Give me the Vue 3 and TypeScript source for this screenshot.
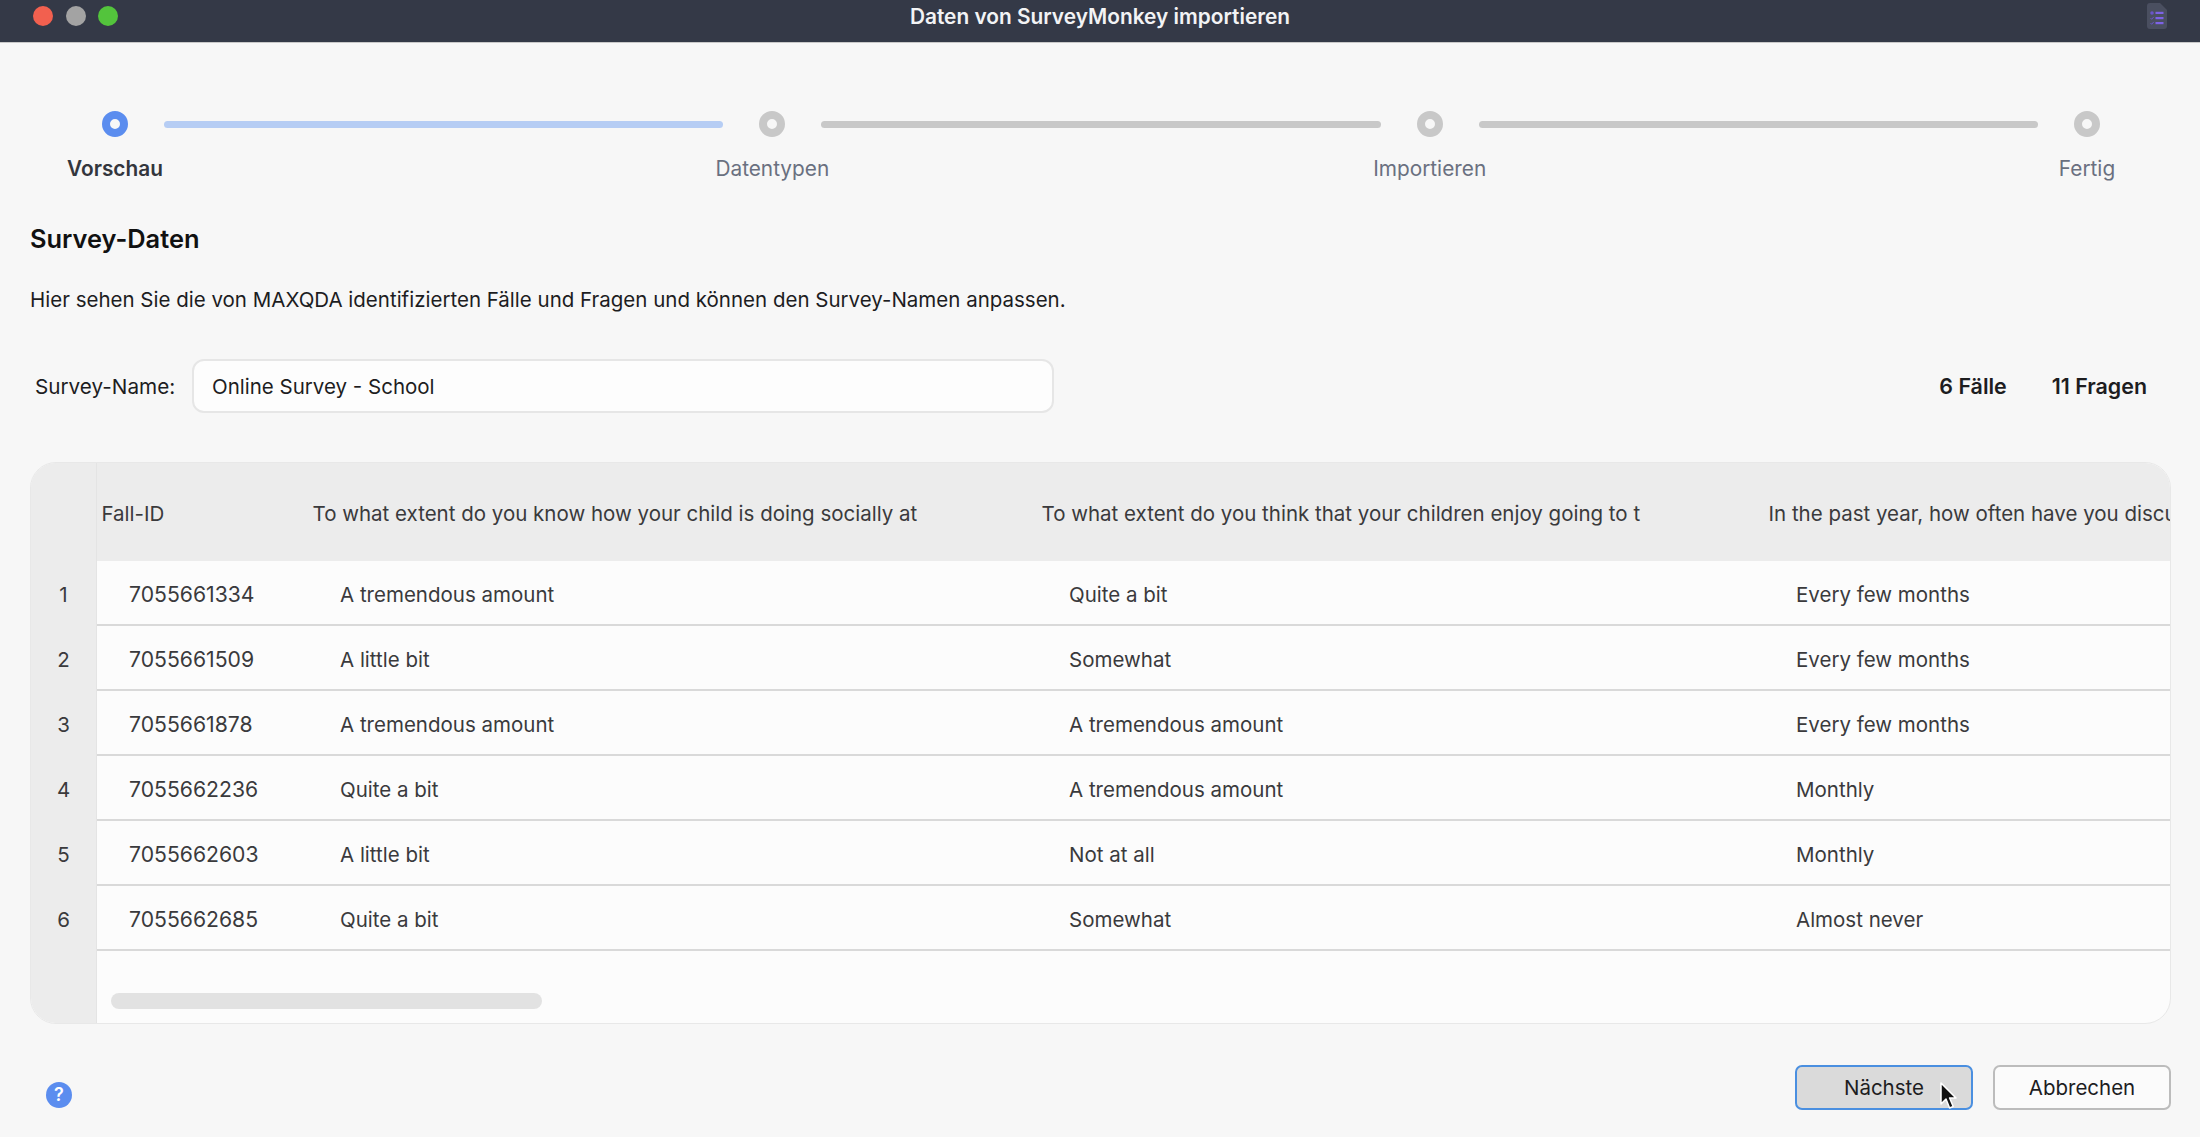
<script setup lang="ts">
const steps = ["Vorschau", "Datentypen", "Importieren", "Fertig"]

const headers = [
  "Fall-ID",
  "To what extent do you know how your child is doing socially at",
  "To what extent do you think that your children enjoy going to t",
  "In the past year, how often have you discussed your child's progress",
]

const rows = [
  ["7055661334", "A tremendous amount", "Quite a bit", "Every few months"],
  ["7055661509", "A little bit", "Somewhat", "Every few months"],
  ["7055661878", "A tremendous amount", "A tremendous amount", "Every few months"],
  ["7055662236", "Quite a bit", "A tremendous amount", "Monthly"],
  ["7055662603", "A little bit", "Not at all", "Monthly"],
  ["7055662685", "Quite a bit", "Somewhat", "Almost never"],
]
</script>

<template>
  <div class="window">
    <header class="titlebar">
      <div class="lights">
        <span class="light red"></span>
        <span class="light grey"></span>
        <span class="light green"></span>
      </div>
      <div class="title">Daten von SurveyMonkey importieren</div>
      <svg class="doc" width="20" height="26" viewBox="0 0 20 26">
        <path d="M3 0h10l7 7v16a3 3 0 0 1-3 3H3a3 3 0 0 1-3-3V3a3 3 0 0 1 3-3z" fill="#4a4f60" />
        <circle cx="5" cy="10" r="1.8" fill="#6a55c8" />
        <rect x="8.5" y="8.8" width="8" height="2.2" fill="#7d62e6" />
        <path d="M3.5 15l1.2 1.3 2-2.4M3.5 20l1.2 1.3 2-2.4" stroke="#6a55c8" stroke-width="1" fill="none" />
        <rect x="8.5" y="14" width="8" height="2.2" fill="#7d62e6" />
        <rect x="8.5" y="19" width="8" height="2.2" fill="#7d62e6" />
      </svg>
    </header>

    <main class="content">
      <div class="stepper">
        <template v-for="(step, i) in steps" :key="step">
          <div class="step" :class="{ active: i === 0 }">
            <span class="dot"></span>
            <span class="step-label">{{ step }}</span>
          </div>
          <div v-if="i < steps.length - 1" class="connector" :class="{ active: i === 0 }"></div>
        </template>
      </div>

      <h1>Survey-Daten</h1>
      <p class="intro">Hier sehen Sie die von MAXQDA identifizierten Fälle und Fragen und können den Survey-Namen anpassen.</p>

      <div class="name-row">
        <label class="name-label" for="survey-name">Survey-Name:</label>
        <input id="survey-name" type="text" value="Online Survey - School" />
        <div class="counts">
          <span>6 Fälle</span>
          <span>11 Fragen</span>
        </div>
      </div>

      <div class="table">
        <div class="row head">
          <div class="index"></div>
          <div v-for="h in headers" :key="h" class="cell">{{ h }}</div>
        </div>
        <div v-for="(row, i) in rows" :key="row[0]" class="row body">
          <div class="index">{{ i + 1 }}</div>
          <div v-for="(value, j) in row" :key="j" class="cell" :class="{ id: j === 0 }">{{ value }}</div>
        </div>
        <div class="table-foot">
          <div class="index"></div>
          <div class="scroll-track"><span class="thumb"></span></div>
        </div>
      </div>

      <footer class="actions">
        <span class="help">?</span>
        <div class="buttons">
          <button type="button" class="primary">
            Nächste
            <svg class="cursor" width="18" height="28" viewBox="0 0 18 28">
              <path d="M2 1v21l5-5 3.6 9 3.6-1.5L10.6 16H17z" fill="#111" stroke="#fff" stroke-width="1.5" stroke-linejoin="round" />
            </svg>
          </button>
          <button type="button">Abbrechen</button>
        </div>
      </footer>
    </main>
  </div>
</template>

<style>
html,
body {
  background: #f7f7f7;
  margin: 0;
}
</style>

<style scoped>
.window {
  background: #f7f7f7;
  color: #1d1d1f;
  font-family: Inter, "Liberation Sans", sans-serif;
  height: 1137px;
  overflow: hidden;
  width: 2200px;
}

.titlebar {
  align-items: center;
  background: #343947;
  border-bottom: 1px solid #c9c9c9;
  display: flex;
  height: 42px;
  justify-content: space-between;
  padding: 0 33px 0 33px;
  position: relative;
}

.lights {
  display: flex;
  gap: 12.5px;
  margin-top: -10px;
}

.light {
  border-radius: 50%;
  height: 20px;
  width: 20px;
}

.red {
  background: #f2604f;
}

.grey {
  background: #a3a3a3;
}

.green {
  background: #53c43c;
}

.title {
  color: #f2f3f5;
  font-size: 20.85px;
  font-weight: 600;
  left: 0;
  position: absolute;
  right: 0;
  text-align: center;
  top: 4px;
}

.doc {
  margin-top: -10px;
}

.stepper {
  display: flex;
  margin-top: 68px;
  padding: 0 64px 0 66px;
}

.step {
  align-items: center;
  color: #6a7080;
  display: flex;
  flex: 0 0 98px;
  flex-direction: column;
  gap: 19px;
  min-width: 0;
}

.dot {
  background: #f7f7f7;
  border: 8px solid #c8c8c8;
  border-radius: 50%;
  box-sizing: border-box;
  height: 26px;
  width: 26px;
}

.step.active {
  color: #33363d;
  font-weight: 600;
}

.step.active .dot {
  border-color: #5b8def;
}

.step-label {
  font-size: 20.8px;
  line-height: 26px;
  white-space: nowrap;
}

.connector {
  background: #c8c8c8;
  border-radius: 4px;
  flex: 1;
  height: 7px;
  margin-top: 9.5px;
}

.connector.active {
  background: #b6cdf4;
}

h1 {
  color: #111;
  font-size: 25.4px;
  font-weight: 600;
  line-height: 32px;
  margin: 41px 0 0 30px;
}

.intro {
  font-size: 20.5px;
  line-height: 26px;
  margin: 32px 0 0 30px;
}

.name-row {
  align-items: center;
  display: flex;
  margin-top: 46px;
  padding: 0 53px 0 35px;
}

.name-label {
  flex: 0 0 157px;
  font-size: 20.7px;
}

input {
  background: #fdfdfd;
  border: 2px solid #e6e6e6;
  border-radius: 12px;
  box-sizing: border-box;
  color: #1d1d1f;
  font: inherit;
  font-size: 20.5px;
  height: 54px;
  padding: 0 18px;
  width: 862px;
}

.counts {
  display: flex;
  font-size: 21.4px;
  font-weight: 600;
  gap: 45px;
  margin-left: auto;
}

.table {
  background: #fcfcfc;
  border: 1px solid #e8e8e8;
  border-radius: 26px;
  color: #3a3a3c;
  display: flex;
  flex-direction: column;
  font-size: 20.5px;
  height: 560px;
  margin: 49px 29px 0 30px;
  overflow: hidden;
}

.row {
  display: grid;
  flex: none;
  grid-template-columns: 66px 211px 729px 727px 727px;
}

.index {
  align-self: stretch;
  background: #ececec;
  border-right: 1px solid #e4e4e4;
  text-align: center;
}

.head {
  background: #ececec;
  grid-template-rows: 98px;
  height: 98px;
}

.head .cell {
  align-self: center;
  padding: 3px 0 0 4.5px;
  white-space: nowrap;
}

.body {
  grid-template-rows: 65px;
  height: 65px;
}

.body .index {
  line-height: 68px;
}

.body .cell {
  border-bottom: 2px solid #d9d9d9;
  line-height: 59px;
  padding: 4px 0 0 32px;
}

.body .cell.id {
  font-size: 21.2px;
}

.table-foot {
  display: flex;
  flex: 1;
}

.table-foot .index {
  flex: 0 0 66px;
  box-sizing: border-box;
}

.scroll-track {
  flex: 1;
  padding: 42px 0 0 14px;
}

.thumb {
  background: #e2e2e2;
  border-radius: 8px;
  display: block;
  height: 16px;
  width: 431px;
}

.actions {
  align-items: center;
  display: flex;
  justify-content: space-between;
  margin-top: 41px;
  padding: 0 29px 0 46px;
}

.help {
  align-items: center;
  background: #5b8def;
  border-radius: 50%;
  color: #fff;
  display: flex;
  font-size: 18px;
  font-weight: 600;
  height: 26px;
  justify-content: center;
  margin-top: 14px;
  width: 26px;
}

.buttons {
  display: flex;
  gap: 20px;
}

button {
  background: #fbfbfb;
  border: 2px solid #bcbcbc;
  border-radius: 7px;
  box-sizing: border-box;
  color: #1d1d1f;
  font: inherit;
  font-size: 20.5px;
  height: 45px;
  position: relative;
  width: 178px;
}

.primary {
  background: #dadada;
  border-color: #4a8fe0;
}

.cursor {
  left: 142px;
  position: absolute;
  top: 15px;
}
</style>
